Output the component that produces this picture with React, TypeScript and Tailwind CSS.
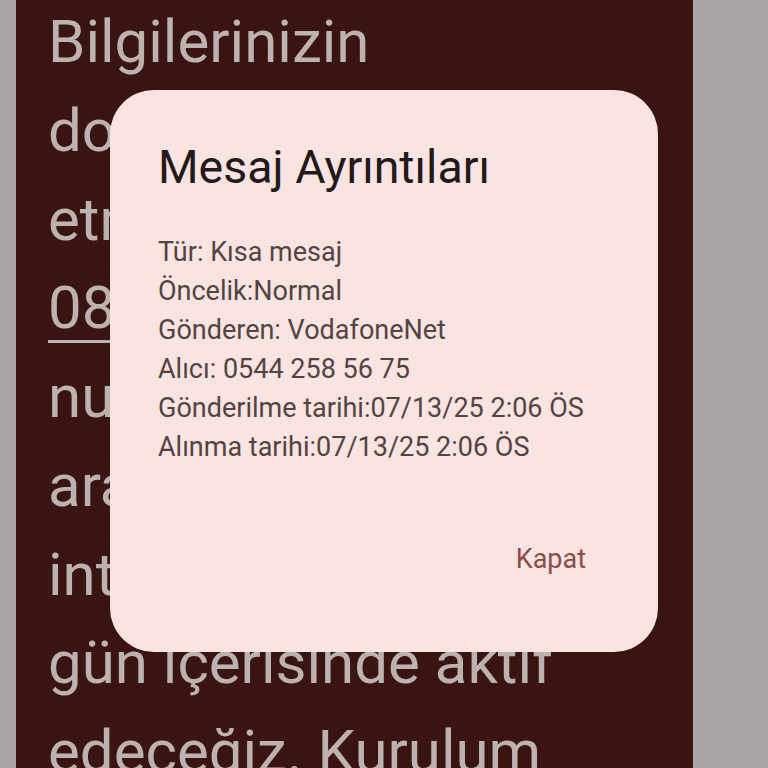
import React from "react";

const bgLines = [
  "Bilgilerinizin",
  "doğrulanması için",
  "etmek isterseniz",
  "08",
  "numaralı hattı",
  "arayabilirsiniz.",
  "internetinizi 3 iş",
  "gün içerisinde aktif",
  "edeceğiz. Kurulum",
];

export default function App() {
  return (
    <div className="relative w-[768px] h-[768px] overflow-hidden bg-[#aca5a5] flex" style={{ fontFamily: "Roboto, 'Noto Sans', sans-serif" }}>
      <div className="w-[16px] shrink-0" />
      <div className="w-[677px] shrink-0 bg-[#3a1412] pl-[32px] overflow-hidden">
        <div className="mt-[-2px] text-[60px] leading-[88.75px] text-[#bcb2b0]">
          {bgLines.map((l, i) => (
            <div key={i} className="whitespace-nowrap">
              {l === "08" ? (
                <span className="underline decoration-[3px] underline-offset-[12px]">0850 460 0 542</span>
              ) : (
                l
              )}
            </div>
          ))}
        </div>
      </div>

      <div className="absolute left-[110px] top-[90px] w-[548px] h-[562px] rounded-[44px] bg-[#f9e4e2] pl-[48px] pr-[72px] flex flex-col">
        <div className="mt-[52px] text-[46.5px] leading-[50px] text-[#231918] whitespace-nowrap">Mesaj Ayrıntıları</div>
        <div className="mt-[41px] text-[27px] leading-[39px] text-[#554341] whitespace-nowrap">
          <div>Tür: Kısa mesaj</div>
          <div>Öncelik:Normal</div>
          <div>Gönderen: VodafoneNet</div>
          <div>Alıcı: 0544 258 56 75</div>
          <div>Gönderilme tarihi:07/13/25 2:06 ÖS</div>
          <div>Alınma tarihi:07/13/25 2:06 ÖS</div>
        </div>
        <div className="mt-[77px] flex justify-end">
          <div className="text-[27px] leading-[30px] text-[#8e4b49]">Kapat</div>
        </div>
      </div>
    </div>
  );
}
